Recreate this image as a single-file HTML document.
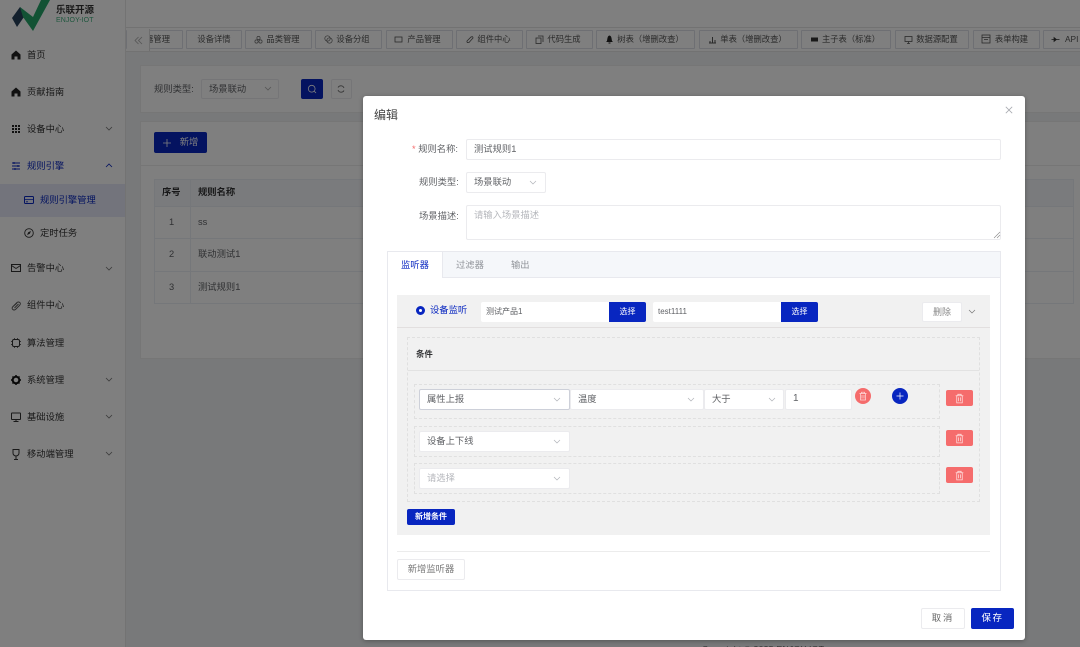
<!DOCTYPE html>
<html lang="zh"><head><meta charset="utf-8"><title>编辑</title>
<style>
html,body{margin:0;padding:0;width:1080px;height:647px;overflow:hidden;background:#f0f2f5}
*{box-sizing:border-box}
body{font-family:"Liberation Sans","Noto Sans CJK SC",sans-serif;font-size:9.3px;color:#606266;position:relative}
.a{position:absolute}
.t{position:absolute;white-space:nowrap;line-height:14px}
.m{color:#303133}
.side{position:absolute;left:0;top:0;width:126px;height:647px;background:#fff;border-right:1px solid #e6e6e6}
.mi{position:absolute;left:27px;white-space:nowrap;line-height:14px;height:14px;font-size:9.3px;color:#333;margin-top:1px}
.ic{position:absolute;left:10px;width:12px;height:12px}
.ch{position:absolute;width:8px;height:5px}
.tab{position:absolute;top:30px;height:19px;border:1px solid #dcdfe6;background:#fff;border-radius:1px;font-size:8.3px;line-height:16px;color:#555;white-space:nowrap;text-align:center}
.card{position:absolute;background:#fff;border:1px solid #ececec}
.box{position:absolute;background:#fff;border:1px solid #ebebee;border-radius:2px;line-height:18px;white-space:nowrap}
.dash{position:absolute;border:1px dashed #e0e0e0}
.red{position:absolute;left:946px;width:27px;height:16px;background:#f56c6c;border-radius:2px}
.blue{position:absolute;background:#0826c0;color:#fff;border-radius:2px;text-align:center;white-space:nowrap}
#ov{position:absolute;left:0;top:0;width:1080px;height:647px;background:rgba(0,0,0,.5)}
#modal{position:absolute;left:363px;top:96px;width:662px;height:544px;background:#fff;border-radius:3px;box-shadow:0 1px 5px rgba(0,0,0,.3)}
svg{display:block;overflow:visible}
</style></head><body>

<!-- Sidebar -->
<div class="side">
 <svg class="a" style="left:0;top:0" width="56" height="32" viewBox="0 0 56 32">
  <path d="M12 18 L20 7 L26 14 L17 27Z" fill="#27415a"/>
  <path d="M20 7 L33 17 L41 0 H50 L33 31 L23 17Z" fill="#24a469"/>
 </svg>
 <div class="t" style="left:56px;top:4px;font-size:9.500px;font-weight:700;color:#333">乐联开源</div>
 <div class="t" style="left:56px;top:14px;font-size:7px;color:#3fae7c;letter-spacing:.1px">ENJOY-IOT</div>

 <svg class="ic" style="top:49px" viewBox="0 0 12 12"><path d="M6 1.500 L10.500 5.500 V10.500 H7.500 V7.500 H4.500 V10.500 H1.500 V5.500Z" fill="#222"/></svg>
 <div class="mi" style="top:47px">首页</div>
 <svg class="ic" style="top:86px" viewBox="0 0 12 12"><path d="M6 1.500 L10.500 5.500 V10.500 H7.500 V7.500 H4.500 V10.500 H1.500 V5.500Z" fill="#222"/></svg>
 <div class="mi" style="top:84px">贡献指南</div>
 <svg class="ic" style="top:123px" viewBox="0 0 12 12"><path d="M2 2h2v2H2zM5 2h2v2H5zM8 2h2v2H8zM2 5h2v2H2zM5 5h2v2H5zM8 5h2v2H8zM2 8h2v2H2zM5 8h2v2H5zM8 8h2v2H8z" fill="#222"/></svg>
 <div class="mi" style="top:121px">设备中心</div>
 <svg class="ch" style="left:105px;top:126px" viewBox="0 0 8 5"><path d="M1 1 L4 4 L7 1" fill="none" stroke="#777" stroke-width=".8"/></svg>

 <svg class="ic" style="top:160px" viewBox="0 0 12 12"><path d="M2 3h8M2 6h8M2 9h8" stroke="#0826c0" stroke-width="1"/><path d="M4 2v2M8 5v2M5 8v2" stroke="#0826c0" stroke-width="1"/></svg>
 <div class="mi" style="top:158px;color:#0826c0">规则引擎</div>
 <svg class="ch" style="left:105px;top:163px" viewBox="0 0 8 5"><path d="M1 4 L4 1 L7 4" fill="none" stroke="#0826c0" stroke-width=".8"/></svg>

 <div class="a" style="left:0;top:184px;width:125px;height:33px;background:#e6e9f8"></div>
 <svg class="ic" style="left:23px;top:194px" viewBox="0 0 12 12"><rect x="1.500" y="2.500" width="9" height="7" rx="1" fill="none" stroke="#0826c0"/><path d="M1.500 5.500h9M3 7.800h2" stroke="#0826c0" stroke-width=".8"/></svg>
 <div class="mi" style="left:40px;top:192px;color:#0826c0">规则引擎管理</div>
 <svg class="ic" style="left:23px;top:227px" viewBox="0 0 12 12"><circle cx="6" cy="6" r="4.300" fill="none" stroke="#333" stroke-width=".9"/><path d="M8 4 L6.800 6.800 L4 8 L5.200 5.200Z" fill="#333"/></svg>
 <div class="mi" style="left:40px;top:225px">定时任务</div>

 <svg class="ic" style="top:262px" viewBox="0 0 12 12"><rect x="1.500" y="2.500" width="9" height="7" fill="none" stroke="#333"/><path d="M1.500 3.500 L6 6.500 L10.500 3.500" fill="none" stroke="#333" stroke-width=".9"/></svg>
 <div class="mi" style="top:260px">告警中心</div>
 <svg class="ch" style="left:105px;top:266px" viewBox="0 0 8 5"><path d="M1 1 L4 4 L7 1" fill="none" stroke="#777" stroke-width=".8"/></svg>

 <svg class="ic" style="top:300px" viewBox="0 0 12 12"><path d="M2.500 7 L7 2.500 Q8.500 1.500 9.800 2.500 T9.500 5.500 L5.500 9.500 Q4 10.500 2.800 9.500 T2.500 7 L7 3 M4.500 8 L8.500 4" fill="none" stroke="#555" stroke-width=".9"/></svg>
 <div class="mi" style="top:297px">组件中心</div>

 <svg class="ic" style="top:337px" viewBox="0 0 12 12"><rect x="2.500" y="2.500" width="7" height="7" rx="1.500" fill="none" stroke="#333"/><path d="M4.500 1v1.500M7.500 1v1.500M4.500 9.500V11M7.500 9.500V11M1 4.500h1.500M1 7.500h1.500M9.500 4.500H11M9.500 7.500H11" stroke="#333" stroke-width=".7"/></svg>
 <div class="mi" style="top:335px">算法管理</div>

 <svg class="ic" style="top:374px" viewBox="0 0 12 12"><circle cx="6" cy="6" r="3.300" fill="none" stroke="#111" stroke-width="2"/><path d="M6 1v2M6 9v2M1 6h2M9 6h2M2.500 2.500l1.500 1.500M8 8l1.500 1.500M2.500 9.500L4 8M8 4l1.500-1.500" stroke="#111" stroke-width="1.500"/></svg>
 <div class="mi" style="top:372px">系统管理</div>
 <svg class="ch" style="left:105px;top:377px" viewBox="0 0 8 5"><path d="M1 1 L4 4 L7 1" fill="none" stroke="#777" stroke-width=".8"/></svg>

 <svg class="ic" style="top:411px" viewBox="0 0 12 12"><rect x="1.500" y="2" width="9" height="6.500" rx=".5" fill="none" stroke="#333"/><path d="M6 8.500V10.500M3.500 10.500h5" stroke="#333"/></svg>
 <div class="mi" style="top:409px">基础设施</div>
 <svg class="ch" style="left:105px;top:414px" viewBox="0 0 8 5"><path d="M1 1 L4 4 L7 1" fill="none" stroke="#777" stroke-width=".8"/></svg>

 <svg class="ic" style="top:448px" viewBox="0 0 12 12"><path d="M3 1.500h6v3.500a3 3 0 0 1-6 0ZM6 8v3.500M4 11.500h4" fill="none" stroke="#333"/></svg>
 <div class="mi" style="top:446px">移动端管理</div>
 <svg class="ch" style="left:105px;top:451px" viewBox="0 0 8 5"><path d="M1 1 L4 4 L7 1" fill="none" stroke="#777" stroke-width=".8"/></svg>
</div>

<!-- Top -->
<div class="a" style="left:126px;top:0;width:954px;height:28px;background:#fff;border-bottom:1px solid #e4e4e4"></div>
<div class="a" style="left:126px;top:28px;width:954px;height:24px;background:#fff;border-bottom:1px solid #e4e4e4"></div>
<div class="tab" style="left:126px;width:57px;text-align:right;padding-right:12px">器管理</div>
<div class="a" style="left:127px;top:29px;width:23px;height:22px;background:#fff;border-right:1px solid #ddd"></div>
<svg class="a" style="left:134px;top:36px" width="9" height="9" viewBox="0 0 9 9"><path d="M4.500 1 L1 4.500 L4.500 8M8 1 L4.500 4.500 L8 8" fill="none" stroke="#aaa" stroke-width=".8"/></svg>
<div class="tab" style="left:186px;width:56px">设备详情</div>
<div class="tab" style="left:245px;width:67px;padding-left:9px">品类管理</div>
<div class="tab" style="left:315px;width:67px;padding-left:9px">设备分组</div>
<div class="tab" style="left:386px;width:67px;padding-left:9px">产品管理</div>
<div class="tab" style="left:456px;width:67px;padding-left:9px">组件中心</div>
<div class="tab" style="left:526px;width:67px;padding-left:9px">代码生成</div>
<div class="tab" style="left:596px;width:99px;padding-left:10px">树表（增删改查）</div>
<div class="tab" style="left:699px;width:99px;padding-left:10px">单表（增删改查）</div>
<div class="tab" style="left:801px;width:90px;padding-left:10px">主子表（标准）</div>
<div class="tab" style="left:895px;width:74px;padding-left:10px">数据源配置</div>
<div class="tab" style="left:973px;width:67px;padding-left:10px">表单构建</div>
<div class="tab" style="left:1043px;width:45px;text-align:left;padding-left:21px">API</div>
<svg class="a" style="left:254px;top:35px" width="9" height="9" viewBox="0 0 9 9"><circle cx="4.500" cy="3" r="1.600" fill="none" stroke="#666" stroke-width=".7"/><circle cx="2.500" cy="6.500" r="1.600" fill="none" stroke="#666" stroke-width=".7"/><circle cx="6.500" cy="6.500" r="1.600" fill="none" stroke="#666" stroke-width=".7"/></svg>
<svg class="a" style="left:324px;top:35px" width="9" height="9" viewBox="0 0 9 9"><circle cx="3.500" cy="3.500" r="2.700" fill="none" stroke="#666" stroke-width=".7"/><circle cx="5.500" cy="5.500" r="2.700" fill="none" stroke="#666" stroke-width=".7"/></svg>
<svg class="a" style="left:394px;top:35px" width="9" height="9" viewBox="0 0 9 9"><rect x="1" y="2" width="7" height="5" fill="none" stroke="#555" stroke-width=".8"/></svg>
<svg class="a" style="left:465px;top:35px" width="9" height="9" viewBox="0 0 9 9"><path d="M2 6 L6 2 Q8 1 8 3 L4 7.500 Q1.500 8 2 6Z" fill="none" stroke="#555" stroke-width=".8"/></svg>
<svg class="a" style="left:535px;top:35px" width="9" height="9" viewBox="0 0 9 9"><rect x="1" y="3" width="5" height="5.500" fill="none" stroke="#555" stroke-width=".8"/><path d="M3 1h5v6" fill="none" stroke="#555" stroke-width=".8"/></svg>
<svg class="a" style="left:605px;top:35px" width="9" height="9" viewBox="0 0 9 9"><path d="M4.500 .5 C6.500 1 6.500 3 7 6 L8 7 H1 L2 6 C2.500 3 2.500 1 4.500 .5ZM3.500 7.500h2v1h-2z" fill="#222"/></svg>
<svg class="a" style="left:708px;top:35px" width="9" height="9" viewBox="0 0 9 9"><path d="M1 8h7M2 8V6M4.500 8V2M7 8V5" stroke="#555"/></svg>
<svg class="a" style="left:810px;top:35px" width="9" height="9" viewBox="0 0 9 9"><rect x="1" y="2.500" width="7" height="4" fill="#333"/></svg>
<svg class="a" style="left:904px;top:35px" width="9" height="9" viewBox="0 0 9 9"><rect x="1" y="1.500" width="7" height="5" fill="none" stroke="#555" stroke-width=".8"/><path d="M4.500 6.500v2M3 8.500h3" stroke="#555" stroke-width=".8"/></svg>
<svg class="a" style="left:981px;top:34px" width="10" height="10" viewBox="0 0 10 10"><rect x="1" y="1" width="8" height="8" fill="none" stroke="#555" stroke-width=".8"/><path d="M1 3.500h8M3 5.500h4" stroke="#555" stroke-width=".7"/></svg>
<svg class="a" style="left:1051px;top:35px" width="9" height="9" viewBox="0 0 9 9"><path d="M.5 4.500h8M3 2.500v4L5.500 4.500Z" stroke="#333" fill="#333" stroke-width=".7"/></svg>

<!-- Page content -->
<div class="card" style="left:140px;top:65px;width:960px;height:48px"></div>
<div class="t" style="left:154px;top:82px">规则类型:</div>
<div class="box" style="left:201px;top:79px;width:78px;height:20px;padding-left:7px">场景联动</div>
<svg class="ch" style="left:264px;top:86px" viewBox="0 0 8 5"><path d="M1 1 L4 4 L7 1" fill="none" stroke="#aaa" stroke-width=".8"/></svg>
<div class="blue" style="left:301px;top:79px;width:22px;height:20px"></div>
<svg class="a" style="left:307px;top:84px" width="10" height="10" viewBox="0 0 10 10"><circle cx="4.700" cy="4.700" r="3.400" fill="none" stroke="#fff" stroke-width=".8"/><path d="M7.200 7.200L9 9" stroke="#fff" stroke-width=".8"/></svg>
<div class="box" style="left:331px;top:79px;width:21px;height:20px"></div>
<svg class="a" style="left:336px;top:84px" width="10" height="10" viewBox="0 0 10 10"><path d="M8 4 A3.300 3.300 0 0 0 2 3.500M2 6 A3.300 3.300 0 0 0 8 6.500" fill="none" stroke="#666" stroke-width=".8"/></svg>

<div class="card" style="left:140px;top:121px;width:960px;height:238px"></div>
<div class="a" style="left:141px;top:165px;width:950px;height:1px;background:#ececec"></div>
<div class="blue" style="left:154px;top:132px;width:53px;height:21px;line-height:21px;padding-left:17px">新增</div>
<svg class="a" style="left:162px;top:138px" width="10" height="10" viewBox="0 0 10 10"><path d="M5 1v8M1 5h8" stroke="#fff" stroke-width=".8"/></svg>

<div class="a" style="left:154px;top:179px;width:920px;height:125px;border:1px solid #ebeef5">
 <div class="a" style="left:0;top:0;width:918px;height:27px;background:#f5f7fa"></div>
 <div class="a" style="left:35px;top:0;width:1px;height:123px;background:#ebeef5"></div>
 <div class="a" style="left:0;top:26px;width:918px;height:1px;background:#ebeef5"></div>
 <div class="a" style="left:0;top:58px;width:918px;height:1px;background:#ebeef5"></div>
 <div class="a" style="left:0;top:91px;width:918px;height:1px;background:#ebeef5"></div>
</div>
<div class="t m" style="left:162px;top:185px;font-weight:700">序号</div>
<div class="t m" style="left:198px;top:185px;font-weight:700">规则名称</div>
<div class="t" style="left:169px;top:215px">1</div><div class="t" style="left:198px;top:215px">ss</div>
<div class="t" style="left:169px;top:247px">2</div><div class="t" style="left:198px;top:247px">联动测试1</div>
<div class="t" style="left:169px;top:280px">3</div><div class="t" style="left:198px;top:280px">测试规则1</div>
<div class="t" style="left:702px;top:642px;font-size:8.600px;color:#666;letter-spacing:.3px">Copyright © 2025 ENJOY-IOT</div>

<div id="ov"></div>

<!-- Modal -->
<div id="modal"></div>
<div class="t" style="left:374px;top:108px;font-size:12px;line-height:14px;color:#444">编辑</div>
<svg class="a" style="left:1005px;top:106px" width="8" height="8" viewBox="0 0 8 8"><path d="M.8 .8L7.200 7.200M7.200 .8L.8 7.200" stroke="#a9abb1" stroke-width=".8"/></svg>

<div class="t" style="left:412px;top:142px"><span style="color:#f56c6c">* </span>规则名称:</div>
<div class="box" style="left:466px;top:139px;width:535px;height:21px;padding-left:7px">测试规则1</div>
<div class="t" style="left:419px;top:175px">规则类型:</div>
<div class="box" style="left:466px;top:172px;width:80px;height:21px;padding-left:7px">场景联动</div>
<svg class="ch" style="left:529px;top:180px" viewBox="0 0 8 5"><path d="M1 1 L4 4 L7 1" fill="none" stroke="#b0b3b8" stroke-width=".7"/></svg>
<div class="t" style="left:419px;top:209px">场景描述:</div>
<div class="box" style="left:466px;top:205px;width:535px;height:35px;padding-left:7px;color:#b4b6bb;line-height:18px">请输入场景描述</div>
<svg class="a" style="left:994px;top:232px" width="6" height="6" viewBox="0 0 6 6"><path d="M0 6L6 0M3 6L6 3" stroke="#888" stroke-width=".6"/></svg>

<!-- Tabs card -->
<div class="a" style="left:387px;top:251px;width:614px;height:340px;border:1px solid #e8e9ee;background:#fff"></div>
<div class="a" style="left:388px;top:252px;width:612px;height:26px;background:#f5f7fa;border-bottom:1px solid #e8e9ee"></div>
<div class="a" style="left:388px;top:252px;width:55px;height:26px;background:#fff;border-right:1px solid #e8e9ee"></div>
<div class="t" style="left:401px;top:258px;color:#0826c0">监听器</div>
<div class="t" style="left:456px;top:258px;color:#909399">过滤器</div>
<div class="t" style="left:511px;top:258px;color:#909399">输出</div>

<!-- Listener block -->
<div class="a" style="left:397px;top:295px;width:593px;height:240px;background:#f1f1f1"></div>
<div class="a" style="left:397px;top:327px;width:593px;height:1px;background:#e2dfdf"></div>
<div class="a" style="left:416px;top:306px;width:9px;height:9px;border-radius:50%;background:#fff;border:3px solid #0826c0"></div>
<div class="t" style="left:430px;top:303px;color:#0826c0">设备监听</div>
<div class="a" style="left:481px;top:302px;width:128px;height:20px;background:#fff;border-radius:2px 0 0 2px;font-size:8px;line-height:20px;padding-left:5px">测试产品1</div>
<div class="blue" style="left:609px;top:302px;width:37px;height:20px;line-height:20px;font-size:8px;border-radius:0 2px 2px 0">选择</div>
<div class="a" style="left:653px;top:302px;width:128px;height:20px;background:#fff;border-radius:2px 0 0 2px;font-size:8px;line-height:20px;padding-left:5px">test1111</div>
<div class="blue" style="left:781px;top:302px;width:37px;height:20px;line-height:20px;font-size:8px;border-radius:0 2px 2px 0">选择</div>
<div class="box" style="left:922px;top:302px;width:40px;height:20px;text-align:center;color:#888;font-size:9px">删除</div>
<svg class="ch" style="left:968px;top:309px" viewBox="0 0 8 5"><path d="M1 1 L4 4 L7 1" fill="none" stroke="#777" stroke-width=".7"/></svg>

<!-- Conditions -->
<div class="dash" style="left:407px;top:337px;width:573px;height:165px"></div>
<div class="a" style="left:408px;top:370px;width:571px;height:1px;background:#e2e2e2"></div>
<div class="t m" style="left:416px;top:347px;font-size:8.400px;font-weight:700">条件</div>

<div class="dash" style="left:414px;top:384px;width:526px;height:35px"></div>
<div class="dash" style="left:414px;top:426px;width:526px;height:31px"></div>
<div class="dash" style="left:414px;top:463px;width:526px;height:31px"></div>

<div class="box" style="left:419px;top:389px;width:151px;height:21px;padding-left:7px;border-color:#cdd0d9">属性上报</div>
<div class="box" style="left:570px;top:389px;width:134px;height:21px;padding-left:7px">温度</div>
<div class="box" style="left:704px;top:389px;width:80px;height:21px;padding-left:7px">大于</div>
<div class="box" style="left:785px;top:389px;width:67px;height:21px;padding-left:7px;font-size:10px">1</div>
<div class="box" style="left:419px;top:431px;width:151px;height:21px;padding-left:7px">设备上下线</div>
<div class="box" style="left:419px;top:468px;width:151px;height:21px;padding-left:7px;color:#b4b6bb">请选择</div>
<svg class="ch" style="left:553px;top:397px" viewBox="0 0 8 5"><path d="M1 1 L4 4 L7 1" fill="none" stroke="#b0b3b8" stroke-width=".7"/></svg>
<svg class="ch" style="left:687px;top:397px" viewBox="0 0 8 5"><path d="M1 1 L4 4 L7 1" fill="none" stroke="#b0b3b8" stroke-width=".7"/></svg>
<svg class="ch" style="left:768px;top:397px" viewBox="0 0 8 5"><path d="M1 1 L4 4 L7 1" fill="none" stroke="#b0b3b8" stroke-width=".7"/></svg>
<svg class="ch" style="left:553px;top:439px" viewBox="0 0 8 5"><path d="M1 1 L4 4 L7 1" fill="none" stroke="#b0b3b8" stroke-width=".7"/></svg>
<svg class="ch" style="left:553px;top:476px" viewBox="0 0 8 5"><path d="M1 1 L4 4 L7 1" fill="none" stroke="#b0b3b8" stroke-width=".7"/></svg>

<div class="a" style="left:855px;top:388px;width:16px;height:16px;border-radius:50%;background:#f56c6c"></div>
<svg class="a" style="left:858px;top:391px" width="10" height="10" viewBox="0 0 10 10"><path d="M1.500 2.500h7M3.500 2.500V1.200h3v1.300M2.500 2.500V9h5V2.500M4 4v3.500M6 4v3.500" fill="none" stroke="#fdd" stroke-width=".7"/></svg>
<div class="a" style="left:892px;top:388px;width:16px;height:16px;border-radius:50%;background:#0826c0"></div>
<svg class="a" style="left:895px;top:391px" width="10" height="10" viewBox="0 0 10 10"><path d="M5 1.500v7M1.500 5h7" stroke="#fff" stroke-width=".7"/></svg>

<div class="red" style="top:390px"></div>
<div class="red" style="top:430px"></div>
<div class="red" style="top:467px"></div>
<svg class="a" style="left:954px;top:393px" width="11" height="11" viewBox="0 0 10 10"><path d="M1.500 2.500h7M3.500 2.500V1.200h3v1.300M2.500 2.500V9h5V2.500M4 4v3.500M6 4v3.500" fill="none" stroke="#fdd" stroke-width=".7"/></svg>
<svg class="a" style="left:954px;top:433px" width="11" height="11" viewBox="0 0 10 10"><path d="M1.500 2.500h7M3.500 2.500V1.200h3v1.300M2.500 2.500V9h5V2.500M4 4v3.500M6 4v3.500" fill="none" stroke="#fdd" stroke-width=".7"/></svg>
<svg class="a" style="left:954px;top:470px" width="11" height="11" viewBox="0 0 10 10"><path d="M1.500 2.500h7M3.500 2.500V1.200h3v1.300M2.500 2.500V9h5V2.500M4 4v3.500M6 4v3.500" fill="none" stroke="#fdd" stroke-width=".7"/></svg>

<div class="blue" style="left:407px;top:509px;width:48px;height:16px;line-height:16px;font-size:8px;font-weight:700">新增条件</div>
<div class="a" style="left:397px;top:551px;width:593px;height:1px;background:#ececec"></div>
<div class="box" style="left:397px;top:559px;width:68px;height:21px;text-align:center;color:#777">新增监听器</div>

<div class="box" style="left:921px;top:608px;width:44px;height:21px;text-align:center;letter-spacing:2px;color:#666">取消</div>
<div class="blue" style="left:971px;top:608px;width:43px;height:21px;line-height:21px;letter-spacing:1.500px;font-size:9.500px">保存</div>
</body></html>
